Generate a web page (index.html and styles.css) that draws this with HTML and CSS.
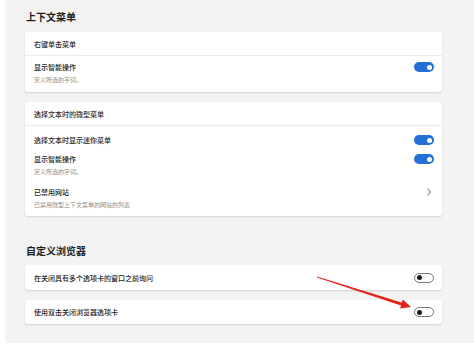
FILE: index.html
```html
<!DOCTYPE html>
<html lang="zh-CN">
<head>
<meta charset="utf-8">
<link rel="stylesheet" href="styles.css">
</head>
<body>
<div class="panel">
  <h2 class="title">上下文菜单</h2>
  <div class="card">
    <div class="row head"><span class="label">右键单击菜单</span></div>
    <div class="row item first-item">
      <div class="text"><div class="label">显示智能操作</div><div class="sub">定义所选的字词。</div></div>
      <span class="toggle on"></span>
    </div>
  </div>

  <div class="card gap">
    <div class="row head"><span class="label">选择文本时的微型菜单</span></div>
    <div class="body">
      <div class="item line">
        <div class="text"><div class="label">选择文本时显示迷你菜单</div></div>
        <span class="toggle on"></span>
      </div>
      <div class="item">
        <div class="text"><div class="label">显示智能操作</div><div class="sub">定义所选的字词。</div></div>
        <span class="toggle on"></span>
      </div>
      <div class="item">
        <div class="text"><div class="label">已禁用网站</div><div class="sub">已禁用微型上下文菜单的网站的列表</div></div>
        <svg class="chev" width="6" height="10" viewBox="0 0 6 10"><path d="M1.5 1.5 L4.5 5 L1.5 8.5" fill="none" stroke="#666" stroke-width="1"/></svg>
      </div>
    </div>
  </div>

  <h2 class="title second">自定义浏览器</h2>
  <div class="card single c3">
    <span class="label">在关闭具有多个选项卡的窗口之前询问</span>
    <span class="toggle off"></span>
  </div>
  <div class="card single c4">
    <span class="label">使用双击关闭浏览器选项卡</span>
    <span class="toggle off"></span>
  </div>
</div>
<svg class="arrow" width="474" height="355" viewBox="0 0 474 355">
  <polygon points="317,276.5 401.6,302.4 402.7,299.4 411,307 400.2,308.4 401,305.6 317,277.5" fill="#e3221a"/>
</svg>
</body>
</html>
```

FILE: styles.css
```css
html, body {
  margin: 0;
  padding: 0;
  background: #ffffff;
  width: 474px;
  height: 355px;
  overflow: hidden;
  font-family: "Noto Sans CJK SC", "Noto Sans", sans-serif;
  color: #262626;
}
.panel {
  margin-left: 5px;
  height: 343px;
  background: #f3f3f3;
  padding: 10px 32px 0 20px;
  box-sizing: border-box;
}
.title {
  margin: 0 0 8px 1px;
  font-size: 10px;
  line-height: 14px;
  font-weight: 700;
  color: #1f1f1f;
}
.title.second {
  margin-top: 28px;
  margin-bottom: 7px;
}
.card {
  background: #fff;
  border-radius: 3px;
  box-shadow: 0 1px 2px rgba(0, 0, 0, 0.14);
}
.card.gap { margin-top: 10px; }
.row.head {
  height: 23px;
  display: flex;
  align-items: center;
  padding: 0 9px;
  border-bottom: 1px solid #ececec;
}
.label {
  font-size: 7px;
  line-height: 10px;
  color: #262626;
  font-weight: 500;
}
.sub {
  font-size: 6px;
  line-height: 10px;
  margin-top: 3px;
  color: #8c8c8c;
}
.item {
  display: flex;
  justify-content: space-between;
  align-items: flex-start;
  padding: 0 8px 0 9px;
}
.first-item {
  padding-top: 6px;
  padding-bottom: 7px;
}
.body {
  padding-top: 9px;
  padding-bottom: 6px;
  display: flex;
  flex-direction: column;
  gap: 9px;
}
.body .item + .item + .item { margin-top: 1px; }
.toggle {
  position: relative;
  width: 20px;
  height: 10px;
  border-radius: 5px;
  box-sizing: border-box;
  flex: none;
}
.toggle.on { background: #2470d6; }
.toggle.on::after {
  content: "";
  position: absolute;
  right: 2.5px;
  top: 2.5px;
  width: 5px;
  height: 5px;
  border-radius: 50%;
  background: #fff;
}
.toggle.off {
  background: #fff;
  border: 1px solid #7a7a7a;
}
.toggle.off::after {
  content: "";
  position: absolute;
  left: 2px;
  top: 1.5px;
  width: 5px;
  height: 5px;
  border-radius: 50%;
  background: #1a1a1a;
}
.chev { flex: none; margin-right: 2px; }
.card.single {
  display: flex;
  justify-content: space-between;
  align-items: center;
  padding: 0 8px 0 9px;
}
.c3 { height: 25px; }
.c4 { height: 24px; margin-top: 10px; }
.arrow {
  position: absolute;
  left: 0;
  top: 0;
  pointer-events: none;
}
```
